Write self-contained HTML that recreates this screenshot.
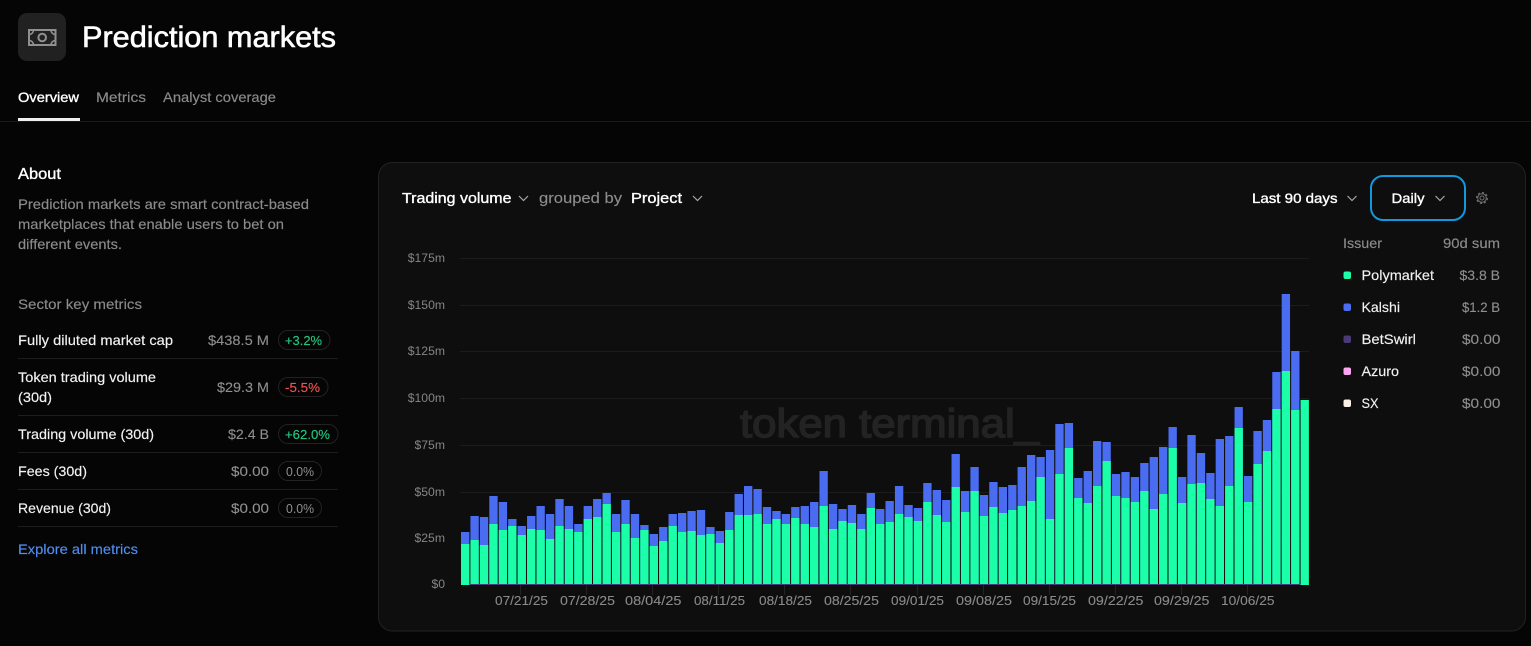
<!DOCTYPE html>
<html><head><meta charset="utf-8"><title>Prediction markets</title>
<style>
html,body{margin:0;padding:0;background:#050505;width:1531px;height:646px;overflow:hidden}
svg{position:absolute;left:0;top:0;display:block}
text{font-family:"Liberation Sans",sans-serif;white-space:pre}
.w{fill:#fff;stroke:#fff;stroke-width:.35px}
.t{fill:#fff;stroke:#fff;stroke-width:.6px}
.g{fill:#8b8b8b;stroke:#8b8b8b;stroke-width:.15px}
.f{fill:#f2f2f2;font-size:14px;stroke:#f2f2f2;stroke-width:.15px}
.v{fill:#8f8f8f;font-size:14px;stroke:#8f8f8f;stroke-width:.12px}
.a{fill:#858585;font-size:12.2px}
.x{fill:#8a8a8a;font-size:12.5px;stroke:#8a8a8a;stroke-width:.1px}
.c{fill:none;stroke:#a8a8a8;stroke-width:1.2}
</style></head><body>
<svg width="1531" height="646" viewBox="0 0 1531 646" xmlns="http://www.w3.org/2000/svg">
<rect x="18" y="13" width="48" height="48" rx="9" fill="#212121"/>
<g fill="none" stroke="#909090">
<rect x="29" y="30" width="26.500" height="15" stroke-width="2"/>
<circle cx="42.200" cy="37.500" r="3.800" stroke-width="2"/>
<path d="M29 34.500a4.500 4.500 0 0 0 4.500-4.500M51 30a4.500 4.500 0 0 0 4.500 4.500M55.500 40.500a4.500 4.500 0 0 0-4.500 4.500M33.500 45a4.500 4.500 0 0 0-4.500-4.500" stroke-width="1.600"/>
</g>
<text x="82" y="47" font-size="29.500" class="t" textLength="254" lengthAdjust="spacingAndGlyphs">Prediction markets</text>
<text x="18" y="102" font-size="14" class="w" textLength="61" lengthAdjust="spacingAndGlyphs">Overview</text>
<text x="96" y="102" font-size="14" class="g" textLength="50" lengthAdjust="spacingAndGlyphs">Metrics</text>
<text x="163" y="102" font-size="14" class="g" textLength="113" lengthAdjust="spacingAndGlyphs">Analyst coverage</text>
<rect x="0" y="121" width="1531" height="1" fill="#1a1a1a"/>
<rect x="18" y="118" width="62" height="3" fill="#efefef"/>

<text x="18" y="179" font-size="15.500" class="w" textLength="43" lengthAdjust="spacingAndGlyphs">About</text>
<text x="18" y="209" font-size="14" class="g" textLength="291" lengthAdjust="spacingAndGlyphs">Prediction markets are smart contract-based</text>
<text x="18" y="229" font-size="14" class="g" textLength="266" lengthAdjust="spacingAndGlyphs">marketplaces that enable users to bet on</text>
<text x="18" y="249" font-size="14" class="g" textLength="104" lengthAdjust="spacingAndGlyphs">different events.</text>
<text x="18" y="309" font-size="14" class="g" textLength="124" lengthAdjust="spacingAndGlyphs">Sector key metrics</text>

<g fill="#1d1d1d">
<rect x="18" y="358" width="320" height="1"/><rect x="18" y="415" width="320" height="1"/><rect x="18" y="452" width="320" height="1"/><rect x="18" y="489" width="320" height="1"/><rect x="18" y="526" width="320" height="1"/>
</g>
<g fill="none" stroke="#222">
<rect x="278.500" y="330.500" width="51.500" height="19" rx="9.500"/>
<rect x="278.500" y="377.500" width="49.500" height="19" rx="9.500"/>
<rect x="278.500" y="424.500" width="59.500" height="19" rx="9.500"/>
<rect x="278.500" y="461.500" width="43" height="19" rx="9.500"/>
<rect x="278.500" y="498.500" width="43" height="19" rx="9.500"/>
</g>
<text x="18" y="345" class="f" textLength="155" lengthAdjust="spacingAndGlyphs">Fully diluted market cap</text>
<text x="208" y="345" class="v" textLength="61" lengthAdjust="spacingAndGlyphs">$438.5 M</text>
<text x="285" y="345" font-size="13" fill="#22c77f" stroke="#22c77f" stroke-width=".15" textLength="37" lengthAdjust="spacingAndGlyphs">+3.2%</text>
<text x="18" y="382" class="f" textLength="138" lengthAdjust="spacingAndGlyphs">Token trading volume</text>
<text x="18" y="402" class="f" textLength="34" lengthAdjust="spacingAndGlyphs">(30d)</text>
<text x="217" y="392" class="v" textLength="52" lengthAdjust="spacingAndGlyphs">$29.3 M</text>
<text x="285" y="392" font-size="13" fill="#ef5350" stroke="#ef5350" stroke-width=".15" textLength="35" lengthAdjust="spacingAndGlyphs">-5.5%</text>
<text x="18" y="439" class="f" textLength="136" lengthAdjust="spacingAndGlyphs">Trading volume (30d)</text>
<text x="228" y="439" class="v" textLength="41" lengthAdjust="spacingAndGlyphs">$2.4 B</text>
<text x="285" y="439" font-size="13" fill="#22c77f" stroke="#22c77f" stroke-width=".15" textLength="45" lengthAdjust="spacingAndGlyphs">+62.0%</text>
<text x="18" y="476" class="f" textLength="69" lengthAdjust="spacingAndGlyphs">Fees (30d)</text>
<text x="231" y="476" class="v" textLength="38" lengthAdjust="spacingAndGlyphs">$0.00</text>
<text x="286" y="476" font-size="13" fill="#8f8f8f" textLength="28" lengthAdjust="spacingAndGlyphs">0.0%</text>
<text x="18" y="513" class="f" textLength="93" lengthAdjust="spacingAndGlyphs">Revenue (30d)</text>
<text x="231" y="513" class="v" textLength="38" lengthAdjust="spacingAndGlyphs">$0.00</text>
<text x="286" y="513" font-size="13" fill="#8f8f8f" textLength="28" lengthAdjust="spacingAndGlyphs">0.0%</text>
<text x="18" y="554" font-size="14" fill="#4f8ef0" stroke="#4f8ef0" stroke-width=".15" textLength="120" lengthAdjust="spacingAndGlyphs">Explore all metrics</text>

<rect x="378.500" y="162.500" width="1147" height="468.500" rx="14" fill="#0e0e0e" stroke="#222"/>

<text x="402" y="203" font-size="15" class="w" textLength="109.500" lengthAdjust="spacingAndGlyphs">Trading volume</text>
<path class="c" d="M519 196l4.500 4.500 4.500-4.500"/>
<text x="539" y="203" font-size="15" class="g" textLength="83" lengthAdjust="spacingAndGlyphs">grouped by</text>
<text x="631" y="203" font-size="15" class="w" textLength="51" lengthAdjust="spacingAndGlyphs">Project</text>
<path class="c" d="M693 196l4.500 4.500 4.500-4.500"/>
<text x="1252" y="203" font-size="14" class="w" textLength="85.500" lengthAdjust="spacingAndGlyphs">Last 90 days</text>
<path class="c" d="M1347.500 196l4.500 4.500 4.500-4.500"/>
<rect x="1371" y="176" width="94" height="44" rx="12" fill="none" stroke="#1198dd" stroke-width="2"/>
<text x="1391.500" y="203" font-size="14" class="w" textLength="33" lengthAdjust="spacingAndGlyphs">Daily</text>
<path class="c" d="M1435.500 196l4.500 4.500 4.500-4.500"/>
<g fill="none" stroke="#6f6f6f">
<circle cx="1482" cy="198" r="2" stroke-width="1"/>
<circle cx="1482" cy="198" r="4.300" stroke-width="1"/>
<circle cx="1482" cy="198" r="5.400" stroke-width="1.200" stroke-dasharray="2.200 2"/>
</g>

<g fill="#1c1c1c">
<rect x="460" y="258" width="849" height="1"/><rect x="460" y="305" width="849" height="1"/><rect x="460" y="351" width="849" height="1"/><rect x="460" y="398" width="849" height="1"/><rect x="460" y="445" width="849" height="1"/><rect x="460" y="492" width="849" height="1"/><rect x="460" y="538" width="849" height="1"/>
</g>
<text x="740" y="437" font-size="40" fill="#232323" stroke="#232323" stroke-width="1.500" textLength="299" lengthAdjust="spacingAndGlyphs">token terminal_</text>

<g text-anchor="end">
<text x="445" y="262" class="a">$175m</text>
<text x="445" y="309" class="a">$150m</text>
<text x="445" y="355" class="a">$125m</text>
<text x="445" y="402" class="a">$100m</text>
<text x="445" y="449" class="a">$75m</text>
<text x="445" y="496" class="a">$50m</text>
<text x="445" y="542" class="a">$25m</text>
<text x="445" y="588" class="a">$0</text>
</g>

<g fill="#242424">
<rect x="520" y="585" width="1" height="10"/><rect x="586" y="585" width="1" height="10"/><rect x="652" y="585" width="1" height="10"/><rect x="718" y="585" width="1" height="10"/><rect x="784" y="585" width="1" height="10"/><rect x="850" y="585" width="1" height="10"/><rect x="917" y="585" width="1" height="10"/><rect x="983" y="585" width="1" height="10"/><rect x="1049" y="585" width="1" height="10"/><rect x="1115" y="585" width="1" height="10"/><rect x="1181" y="585" width="1" height="10"/><rect x="1247" y="585" width="1" height="10"/>
</g>
<text x="495" y="605" class="x" textLength="53" lengthAdjust="spacingAndGlyphs">07/21/25</text>
<text x="560" y="605" class="x" textLength="55" lengthAdjust="spacingAndGlyphs">07/28/25</text>
<text x="625" y="605" class="x" textLength="56.500" lengthAdjust="spacingAndGlyphs">08/04/25</text>
<text x="694" y="605" class="x" textLength="51" lengthAdjust="spacingAndGlyphs">08/11/25</text>
<text x="759" y="605" class="x" textLength="53" lengthAdjust="spacingAndGlyphs">08/18/25</text>
<text x="824" y="605" class="x" textLength="55" lengthAdjust="spacingAndGlyphs">08/25/25</text>
<text x="891" y="605" class="x" textLength="53" lengthAdjust="spacingAndGlyphs">09/01/25</text>
<text x="956" y="605" class="x" textLength="56" lengthAdjust="spacingAndGlyphs">09/08/25</text>
<text x="1023" y="605" class="x" textLength="53" lengthAdjust="spacingAndGlyphs">09/15/25</text>
<text x="1088" y="605" class="x" textLength="55.500" lengthAdjust="spacingAndGlyphs">09/22/25</text>
<text x="1154" y="605" class="x" textLength="55.500" lengthAdjust="spacingAndGlyphs">09/29/25</text>
<text x="1221" y="605" class="x" textLength="53.500" lengthAdjust="spacingAndGlyphs">10/06/25</text>

<svg x="450" y="280" width="900" height="320" viewBox="0 -300 2700 960">
<rect x="40" y="612" width="2520" height="3" fill="#4a3a78"/>
<path fill="none" stroke="#4a6cf0" stroke-width="25" d="M45.500 456V612M73.800 408V612M102.100 411V612M130.400 348V612M158.700 366V612M187 417V612M215.300 438V612M243.600 408V612M271.900 378V612M300.200 402V612M328.500 357V612M356.800 378V612M385.100 432V612M413.400 378V612M441.700 357V612M470 339V612M498.300 402V612M526.600 360V612M554.900 402V612M583.200 435V612M611.500 462V612M639.800 441V612M668.100 402V612M696.400 399V612M724.700 393V612M753 390V612M781.300 441V612M809.600 453V612M837.900 396V612M866.200 342V612M894.500 318V612M922.800 327V612M951.100 381V612M979.400 393V612M1007.700 402V612M1036 381V612M1064.300 378V612M1092.600 366V612M1120.900 273V612M1149.200 372V612M1177.500 387V612M1205.800 375V612M1234.100 402V612M1262.400 339V612M1290.700 387V612M1319 363V612M1347.300 318V612M1375.600 375V612M1403.900 384V612M1432.200 309V612M1460.500 330V612M1488.800 360V612M1517.100 222V612M1545.400 333V612M1573.700 261V612M1602 345V612M1630.300 306V612M1658.600 321V612M1686.900 315V612M1715.200 261V612M1743.500 225V612M1771.800 231V612M1800.100 210V612M1828.400 132V612M1856.700 129V612M1885 294V612M1913.300 273V612M1941.600 183V612M1969.900 186V612M1998.200 282V612M2026.500 276V612M2054.800 291V612M2083.100 249V612M2111.400 231V612M2139.700 201V612M2168 141V612M2196.300 291V612M2224.600 165V612M2252.900 219V612M2281.200 279V612M2309.500 177V612M2337.800 168V612M2366.100 81V612M2394.400 288V612M2422.700 153V612M2451 120V612M2479.300 -24V612M2507.600 -258V612M2535.900 -87V612"/>
<path fill="none" stroke="#1affa8" stroke-width="25" d="M45.500 492V615M73.800 480V612M102.100 495V612M130.400 432V612M158.700 450V612M187 438V612M215.300 465V612M243.600 447V612M271.900 450V612M300.200 477V612M328.500 438V612M356.800 447V612M385.100 456V612M413.400 417V612M441.700 411V612M470 372V612M498.300 456V612M526.600 432V612M554.900 474V612M583.200 450V612M611.500 498V612M639.800 483V612M668.100 438V612M696.400 456V612M724.700 453V612M753 465V612M781.300 462V612M809.600 489V612M837.900 450V612M866.200 405V612M894.500 405V612M922.800 402V612M951.100 432V612M979.400 417V612M1007.700 432V612M1036 414V612M1064.300 432V612M1092.600 441V612M1120.900 378V612M1149.200 447V612M1177.500 423V612M1205.800 429V612M1234.100 447V612M1262.400 384V612M1290.700 432V612M1319 426V612M1347.300 402V612M1375.600 411V612M1403.900 423V612M1432.200 366V612M1460.500 405V612M1488.800 426V612M1517.100 321V612M1545.400 396V612M1573.700 333V612M1602 408V612M1630.300 381V612M1658.600 399V612M1686.900 390V612M1715.200 378V612M1743.500 363V612M1771.800 291V612M1800.100 417V612M1828.400 282V612M1856.700 204V612M1885 354V612M1913.300 369V612M1941.600 318V612M1969.900 243V612M1998.200 348V612M2026.500 354V612M2054.800 366V612M2083.100 333V612M2111.400 387V612M2139.700 342V612M2168 204V612M2196.300 369V612M2224.600 312V612M2252.900 309V612M2281.200 357V612M2309.500 378V612M2337.800 318V612M2366.100 144V612M2394.400 366V612M2422.700 252V612M2451 213V612M2479.300 87V612M2507.600 -27V612M2535.900 90V612M2564.200 60V615"/>
</svg>

<text x="1343" y="248" font-size="14" class="g" textLength="39" lengthAdjust="spacingAndGlyphs">Issuer</text>
<text x="1443" y="248" font-size="14" class="g" textLength="57" lengthAdjust="spacingAndGlyphs">90d sum</text>
<rect x="1343.500" y="271.500" width="7.500" height="7.500" rx="2" fill="#1affa8"/>
<rect x="1343.500" y="303.500" width="7.500" height="7.500" rx="2" fill="#4a6cf0"/>
<rect x="1343.500" y="335.500" width="7.500" height="7.500" rx="2" fill="#4a3a78"/>
<rect x="1343.500" y="367.500" width="7.500" height="7.500" rx="2" fill="#ffa6f2"/>
<rect x="1343.500" y="399.500" width="7.500" height="7.500" rx="2" fill="#faf0e4"/>
<text x="1361.500" y="280" class="f" textLength="72.500" lengthAdjust="spacingAndGlyphs">Polymarket</text>
<text x="1361.500" y="312" class="f" textLength="38.500" lengthAdjust="spacingAndGlyphs">Kalshi</text>
<text x="1361.500" y="344" class="f" textLength="54.500" lengthAdjust="spacingAndGlyphs">BetSwirl</text>
<text x="1361.500" y="376" class="f" textLength="37.500" lengthAdjust="spacingAndGlyphs">Azuro</text>
<text x="1361.500" y="408" class="f" textLength="17" lengthAdjust="spacingAndGlyphs">SX</text>
<text x="1459.500" y="280" class="v" textLength="40.500" lengthAdjust="spacingAndGlyphs">$3.8 B</text>
<text x="1462" y="312" class="v" textLength="38" lengthAdjust="spacingAndGlyphs">$1.2 B</text>
<text x="1462" y="344" class="v" textLength="38.500" lengthAdjust="spacingAndGlyphs">$0.00</text>
<text x="1462" y="376" class="v" textLength="38.500" lengthAdjust="spacingAndGlyphs">$0.00</text>
<text x="1462" y="408" class="v" textLength="38.500" lengthAdjust="spacingAndGlyphs">$0.00</text>
</svg>
</body></html>
